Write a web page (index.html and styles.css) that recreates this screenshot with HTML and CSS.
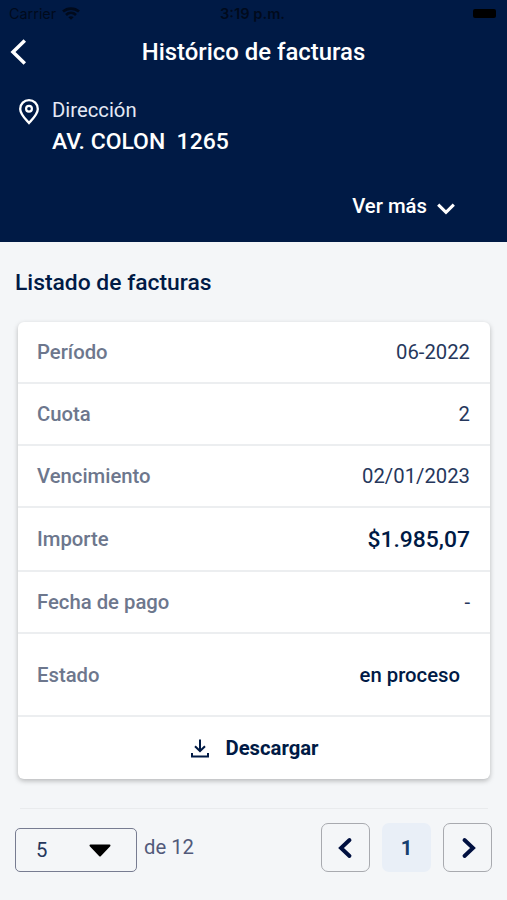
FILE: index.html
```html
<!DOCTYPE html>
<html lang="es">
<head>
<meta charset="utf-8">
<meta name="viewport" content="width=device-width, initial-scale=1">
<title>Histórico de facturas</title>
<link rel="stylesheet" href="styles.css">
</head>
<body>
<header class="header">
  <div class="status">
    <div class="carrier"><span>Carrier</span>
      <svg class="wifi" viewBox="0 0 18 13" fill="none" stroke="currentColor" stroke-width="2.7"><path d="M1 4.600C5.500.5 12.500.5 17 4.600M4 7.900C6.900 5.300 11.100 5.300 14 7.900"/><path d="M9 12.800 6.300 10.200C7.800 8.900 10.200 8.900 11.700 10.200Z" fill="currentColor" stroke="none"/></svg>
    </div>
    <span class="time">3:19 p.m.</span>
    <span class="battery"></span>
  </div>
  <div class="titlebar">
    <svg class="back" viewBox="0 0 16 26" fill="none" stroke="currentColor" stroke-width="3.5"><path d="M14.800 1.600 3 13l11.800 11.400"/></svg>
    <h1 class="title">Histórico de facturas</h1>
  </div>
  <div class="address">
    <svg class="pin" viewBox="0 0 20 26" fill="none" stroke="currentColor"><path stroke-width="2.300" d="M10 24C7 20.500 1.200 15.200 1.200 9.900a8.800 8.800 0 0 1 17.600 0C18.800 15.200 13 20.500 10 24Z"/><circle cx="10" cy="9.700" r="2.900" stroke-width="2.200"/></svg>
    <div class="lines">
      <div class="caption">Dirección</div>
      <div class="street">AV. COLON&nbsp; 1265</div>
    </div>
  </div>
  <div class="more"><span>Ver más</span>
    <svg class="down" viewBox="0 0 18 12" fill="none" stroke="currentColor" stroke-width="3.100"><path d="m1.200 1.600 7.800 7.800 7.800-7.800"/></svg>
  </div>
</header>
<main class="main">
  <h2 class="heading">Listado de facturas</h2>
  <section class="card">
    <div class="row"><span class="label">Período</span><span class="value">06-2022</span></div>
    <div class="row"><span class="label">Cuota</span><span class="value">2</span></div>
    <div class="row"><span class="label">Vencimiento</span><span class="value">02/01/2023</span></div>
    <div class="row amount"><span class="label">Importe</span><span class="value">$1.985,07</span></div>
    <div class="row"><span class="label">Fecha de pago</span><span class="value">-</span></div>
    <div class="row state"><span class="label">Estado</span><span class="value">en proceso</span></div>
    <div class="download">
      <svg class="dl" viewBox="0 0 18 19" fill="none" stroke="currentColor" stroke-width="2"><path d="M9 .5v11M4 7.200 9 12l5-4.800M1 14v3.500h16V14"/></svg>
      <span>Descargar</span>
    </div>
  </section>
  <div class="rule"></div>
  <footer class="pager">
    <div class="select"><span>5</span><svg class="caret" viewBox="0 0 22 13"><path d="M1.500 1.500h19L11 11.500Z" fill="#000" stroke="#000" stroke-width="2" stroke-linejoin="round"/></svg></div>
    <span class="total">de 12</span>
    <div class="pages">
      <div class="page"><svg class="chev" viewBox="0 0 14 20" fill="none" stroke="currentColor" stroke-width="3.900" stroke-linecap="round"><path d="M10.500 2 2 10l8.500 8"/></svg></div>
      <div class="page current">1</div>
      <div class="page"><svg class="chev" viewBox="0 0 14 20" fill="none" stroke="currentColor" stroke-width="3.900" stroke-linecap="round"><path d="m3.500 2 8.500 8-8.500 8"/></svg></div>
    </div>
  </footer>
</main>
</body>
</html>
```
FILE: styles.css
```css
* { box-sizing: border-box; }
body { margin: 0; height: 900px; overflow: hidden; background: #f4f6f8; color: #001a45; font-family: Roboto, sans-serif; font-size: 20.300px; line-height: 24px; }
svg { display: block; flex: none; overflow: visible; }
h1, h2 { margin: 0; font-weight: 500; }

.header { height: 242px; background: #001a45; color: #fff; }
.status { display: grid; grid-template-columns: 1fr auto 1fr; align-items: center; height: 28px; padding: 0 11px 0 9px; color: #000a1c; font-family: Inter, sans-serif; font-size: 14.400px; }
.carrier { display: flex; align-items: center; gap: 6px; }
.wifi { width: 18px; height: 13px; margin-top: -2px; }
.time { font-weight: 600; font-size: 14.700px; }
.battery { justify-self: end; width: 23px; height: 9px; margin-top: -2px; border-radius: 2px; background: #000; }

.titlebar { display: grid; grid-template-columns: 40px 1fr 40px; align-items: center; height: 48px; padding: 0 10px; }
.back { width: 16px; height: 26px; }
.title { text-align: center; font-size: 23.900px; line-height: 28px; }

.address { display: flex; gap: 13px; padding: 22px 0 0 19px; }
.pin { width: 20px; height: 26px; margin-top: 1px; }
.caption { color: #e4e9f5; }
.street { margin-top: 7px; font-size: 22.950px; font-weight: 500; line-height: 26px; }
.more { display: flex; align-items: center; justify-content: flex-end; gap: 10px; margin-top: 39px; padding-right: 52px; font-weight: 500; }
.down { width: 18px; height: 12px; margin-top: 5px; }

.main { padding: 27px 15px 0; }
.heading { font-size: 22.850px; line-height: 28px; }
.card { margin: 25px 2px 0 3px; background: #fff; border-radius: 6px; box-shadow: 0 2px 5px rgba(0, 0, 0, .25); }
.row { display: flex; align-items: center; justify-content: space-between; height: 62px; padding: 0 20px 0 19px; border-bottom: 2px solid #eceef0; }
.label { color: #6d778d; font-weight: 500; }
.value { color: #26375c; }
.amount { height: 64px; }
.amount .value { padding-top: 1px; color: #001a45; font-size: 22.900px; font-weight: 500; }
.state { height: 83px; padding-right: 30px; }
.state .value { color: #001a45; font-weight: 500; }
.download { display: flex; align-items: center; justify-content: center; gap: 16px; height: 62px; padding-left: 2px; font-weight: 700; }
.dl { width: 18px; height: 19px; }

.rule { height: 1px; margin: 29px 4px 14px 5px; background: #e9ebed; }
.pager { display: flex; align-items: flex-start; }
.select { display: flex; align-items: center; justify-content: space-between; width: 122px; height: 44px; margin-top: 5px; padding: 0 25px 0 20px; border: 1px solid #777c91; border-radius: 5px; color: #26375c; }
.caret { width: 22px; height: 13px; }
.total { margin: 12px 0 0 7px; color: #525a7a; }
.pages { display: flex; gap: 12px; margin-left: auto; }
.page { display: flex; align-items: center; justify-content: center; width: 49px; height: 49px; border: 1px solid #a8aaaf; border-radius: 7px; color: #001040; }
.current { border-color: transparent; background: #e9eff7; color: #17406e; font-weight: 700; }
.chev { width: 14px; height: 20px; }
```
